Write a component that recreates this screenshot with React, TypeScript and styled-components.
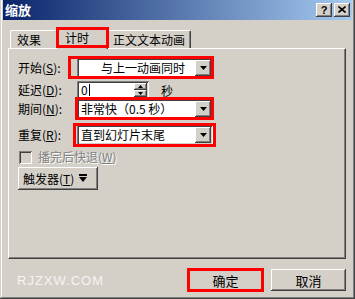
import React from 'react'
import styled, { createGlobalStyle, css } from 'styled-components'

const GlobalStyle = createGlobalStyle`
  html, body {
    margin: 0;
    padding: 0;
    background: #d4d0c8;
  }
  body {
    font-family: "Noto Sans CJK SC", "Liberation Sans", sans-serif;
    font-size: 12px;
    color: #000;
  }
  * {
    box-sizing: border-box;
  }
`

const raised = css`
  box-shadow: inset -1px -1px #404040, inset 1px 1px #ffffff, inset -2px -2px #808080,
    inset 2px 2px #d4d0c8;
`

const sunken = css`
  box-shadow: inset 1px 1px #808080, inset -1px -1px #ffffff, inset 2px 2px #404040,
    inset -2px -2px #d4d0c8;
`

const Window = styled.div`
  width: 355px;
  height: 299px;
  padding: 0 3px 3px 3px;
  background: #d4d0c8;
  display: flex;
  flex-direction: column;
  box-shadow: inset -1px -1px #404040, inset 1px 0 #d4d0c8, inset -2px -2px #808080,
    inset 2px 0 #ffffff;
`

const TitleBar = styled.div`
  height: 20px;
  display: flex;
  align-items: center;
  justify-content: space-between;
  padding: 0 2px 0 2px;
  background: linear-gradient(to right, #0a246a, #a6caf0);
`

const Title = styled.span`
  color: #fff;
  font-weight: bold;
  font-size: 13px;
  line-height: 20px;
`

const CaptionButtons = styled.div`
  display: flex;
  gap: 2px;
`

const CaptionButton = styled.div`
  width: 16px;
  height: 14px;
  background: #d4d0c8;
  ${raised};
  display: flex;
  align-items: center;
  justify-content: center;
  font-family: "Liberation Sans", sans-serif;
  font-weight: bold;
  font-size: 11px;
  line-height: 14px;
  padding-bottom: 1px;
`

const Body = styled.div`
  flex: 1;
  display: flex;
  flex-direction: column;
  padding: 7px 6px 0 5px;
`

const TabStrip = styled.div`
  height: 21px;
  display: flex;
  align-items: flex-end;
  padding-left: 2px;
`

const Tab = styled.div<{ $active?: boolean; $marked?: boolean }>`
  position: relative;
  height: ${(p) => (p.$active ? '22px' : '18px')};
  min-width: ${(p) => (p.$active ? '52px' : '48px')};
  padding: ${(p) => (p.$active ? '0 8px' : '0 5px 0 6px')};
  margin: ${(p) => (p.$active ? '0 -2px -1px -2px' : '0')};
  z-index: ${(p) => (p.$active ? 1 : 0)};
  line-height: ${(p) => (p.$active ? '19px' : '17px')};
  background: #d4d0c8;
  border-top: 1px solid #ffffff;
  border-left: 1px solid #ffffff;
  border-right: 1px solid #404040;
  border-radius: 2px 2px 0 0;
  box-shadow: inset -1px 0 #808080;
  white-space: nowrap;

  ${(p) =>
    p.$marked &&
    css`
      &::after {
        content: '';
        position: absolute;
        top: -1px;
        left: -1px;
        right: -2px;
        bottom: 1px;
        border: 3px solid #ff0000;
        pointer-events: none;
      }
    `}
`

const Panel = styled.div`
  height: 211px;
  display: flex;
  flex-direction: column;
  padding: 9px 0 0 9px;
  background: #d4d0c8;
  border-top: 1px solid #ffffff;
  border-left: 1px solid #ffffff;
  border-right: 1px solid #404040;
  border-bottom: 1px solid #404040;
  box-shadow: inset -1px -1px #808080;
`

const Row = styled.div<{ $mt?: number }>`
  display: flex;
  align-items: center;
  margin-top: ${(p) => p.$mt ?? 0}px;
`

const Label = styled.div`
  width: 59px;
  white-space: nowrap;
  line-height: 16px;
`

const Mark = styled.div<{ $l: number; $t: number; $r: number; $b: number }>`
  position: relative;
  display: flex;

  &::after {
    content: '';
    position: absolute;
    left: -${(p) => p.$l}px;
    top: -${(p) => p.$t}px;
    right: -${(p) => p.$r}px;
    bottom: -${(p) => p.$b}px;
    border: 3px solid #ff0000;
    pointer-events: none;
  }
`

const Combo = styled.div`
  width: 136px;
  height: 20px;
  background: #ffffff;
  ${sunken};
  display: flex;
  align-items: center;
  padding: 2px;
`

const ComboText = styled.div<{ $indent?: number }>`
  flex: 1;
  padding-left: ${(p) => p.$indent ?? 2}px;
  white-space: nowrap;
  line-height: 16px;
`

const DropButton = styled.div`
  width: 16px;
  height: 16px;
  background: #d4d0c8;
  ${raised};
  display: flex;
  align-items: center;
  justify-content: center;
`

const SpinField = styled.div`
  width: 72px;
  height: 18px;
  background: #ffffff;
  ${sunken};
  display: flex;
  align-items: center;
  padding: 2px;
`

const SpinText = styled.div`
  flex: 1;
  padding-left: 2px;
  line-height: 14px;
  display: flex;
  align-items: center;
`

const Caret = styled.span`
  display: inline-block;
  width: 1px;
  height: 12px;
  background: #000;
  margin-left: 1px;
`

const Spinner = styled.div`
  width: 13px;
  height: 14px;
  display: flex;
  flex-direction: column;
`

const SpinButton = styled.div`
  flex: 1;
  background: #d4d0c8;
  ${raised};
  display: flex;
  align-items: center;
  justify-content: center;
`

const Unit = styled.span`
  margin-left: 12px;
`

const CheckBox = styled.div`
  width: 13px;
  height: 13px;
  background: #d4d0c8;
  ${sunken};
  margin-left: 1px;
`

const DisabledText = styled.span`
  margin-left: 6px;
  color: #808080;
  text-shadow: 1px 1px #ffffff;
  line-height: 14px;
`

const TriggerButton = styled.div`
  width: 80px;
  height: 23px;
  background: #d4d0c8;
  ${raised};
  display: flex;
  align-items: center;
  padding-left: 5px;
  gap: 5px;
  white-space: nowrap;
`

const Footer = styled.div`
  display: flex;
  align-items: center;
  margin-top: 10px;
`

const Watermark = styled.div`
  margin-left: 9px;
  flex: 1;
  font-family: "Liberation Sans", sans-serif;
  font-size: 13px;
  letter-spacing: 1px;
  color: #f4f4f2;
`

const Buttons = styled.div`
  display: flex;
  gap: 8px;
`

const PushButton = styled.div`
  width: 75px;
  height: 22px;
  background: #d4d0c8;
  ${raised};
  display: flex;
  align-items: center;
  justify-content: center;
  font-size: 13px;
`

const Arrow = () => (
  <svg width="7" height="4" viewBox="0 0 7 4">
    <polygon points="0,0 7,0 3.5,4" fill="#000" />
  </svg>
)

const SmallArrow = ({ up }: { up?: boolean }) => (
  <svg width="5" height="3" viewBox="0 0 5 3">
    <polygon points={up ? '0,3 5,3 2.5,0' : '0,0 5,0 2.5,3'} fill="#000" />
  </svg>
)

const TriggerIcon = () => (
  <svg width="8" height="9" viewBox="0 0 8 9">
    <rect x="0" y="0" width="8" height="2" fill="#000" />
    <polygon points="0,3 8,3 4,8" fill="#000" />
  </svg>
)

const CloseIcon = () => (
  <svg width="8" height="7" viewBox="0 0 8 7">
    <path d="M0.5 0.5 L7.5 6.5 M7.5 0.5 L0.5 6.5" stroke="#000" strokeWidth="1.6" />
  </svg>
)

const App = () => {
  return (
    <>
      <GlobalStyle />
      <Window>
        <TitleBar>
          <Title>缩放</Title>
          <CaptionButtons>
            <CaptionButton>?</CaptionButton>
            <CaptionButton>
              <CloseIcon />
            </CaptionButton>
          </CaptionButtons>
        </TitleBar>
        <Body>
          <TabStrip>
            <Tab>效果</Tab>
            <Tab $active $marked>
              计时
            </Tab>
            <Tab>正文文本动画</Tab>
          </TabStrip>
          <Panel>
            <Row>
              <Label>
                开始(<u>S</u>):
              </Label>
              <Mark $l={9} $t={2} $r={1} $b={1}>
                <Combo>
                  <ComboText $indent={22}>与上一动画同时</ComboText>
                  <DropButton>
                    <Arrow />
                  </DropButton>
                </Combo>
              </Mark>
            </Row>
            <Row $mt={3}>
              <Label>
                延迟(<u>D</u>):
              </Label>
              <SpinField>
                <SpinText>
                  0<Caret />
                </SpinText>
                <Spinner>
                  <SpinButton>
                    <SmallArrow up />
                  </SpinButton>
                  <SpinButton>
                    <SmallArrow />
                  </SpinButton>
                </Spinner>
              </SpinField>
              <Unit>秒</Unit>
            </Row>
            <Row>
              <Label>
                期间(<u>N</u>):
              </Label>
              <Mark $l={2} $t={2} $r={1} $b={1}>
                <Combo>
                  <ComboText>非常快（0.5 秒）</ComboText>
                  <DropButton>
                    <Arrow />
                  </DropButton>
                </Combo>
              </Mark>
            </Row>
            <Row $mt={6}>
              <Label>
                重复(<u>R</u>):
              </Label>
              <Mark $l={4} $t={2} $r={3} $b={2}>
                <Combo>
                  <ComboText>直到幻灯片末尾</ComboText>
                  <DropButton>
                    <Arrow />
                  </DropButton>
                </Combo>
              </Mark>
            </Row>
            <Row $mt={5}>
              <CheckBox />
              <DisabledText>
                播完后快退(<u>W</u>)
              </DisabledText>
            </Row>
            <Row $mt={3}>
              <TriggerButton>
                <span>
                  触发器(<u>T</u>)
                </span>
                <TriggerIcon />
              </TriggerButton>
            </Row>
          </Panel>
          <Footer>
            <Watermark>RJZXW.COM</Watermark>
            <Buttons>
              <Mark $l={1} $t={1} $r={1} $b={1}>
                <PushButton>确定</PushButton>
              </Mark>
              <PushButton>取消</PushButton>
            </Buttons>
          </Footer>
        </Body>
      </Window>
    </>
  )
}

export default App
